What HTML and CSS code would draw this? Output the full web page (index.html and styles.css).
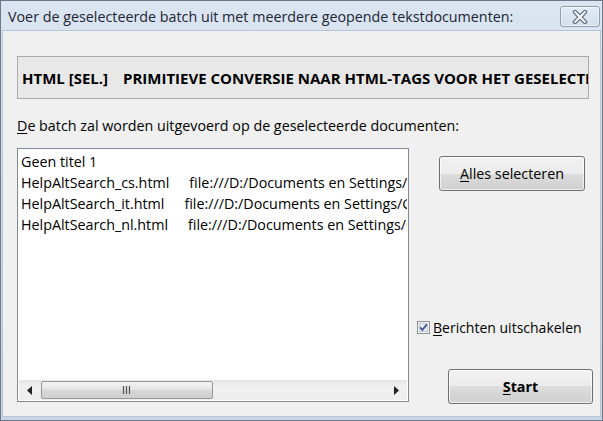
FILE: index.html
```html
<!DOCTYPE html>
<html>
<head>
<meta charset="utf-8">
<link rel="stylesheet" href="styles.css">
</head>
<body>
<div class="window">
  <div class="titlebar">
    <span class="title">Voer de geselecteerde batch uit met meerdere geopende tekstdocumenten:</span>
    <div class="close">
      <svg width="18" height="14" viewBox="0 0 18 14">
        <path d="M4 2 L14 12 M14 2 L4 12" stroke="#55606f" stroke-width="4.4" stroke-linecap="round" fill="none"/>
        <path d="M4 2 L14 12 M14 2 L4 12" stroke="#f4f6f8" stroke-width="2.4" stroke-linecap="round" fill="none"/>
      </svg>
    </div>
  </div>
  <div class="client">
    <div class="header">
      <span class="hname">HTML [SEL.]</span><span class="hdesc">PRIMITIEVE CONVERSIE NAAR HTML-TAGS VOOR HET GESELECTEERDE DOCUMENT</span>
    </div>
    <div class="label"><u>D</u>e batch zal worden uitgevoerd op de geselecteerde documenten:</div>
    <div class="main">
      <div class="listbox">
        <div class="items">
          <div class="item"><span class="name">Geen titel 1</span></div>
          <div class="item"><span class="name">HelpAltSearch_cs.html</span><span class="path">file:///D:/Documents en Settings/Gebruiker/Bureaublad/HelpAltSearch_cs.html</span></div>
          <div class="item"><span class="name">HelpAltSearch_it.html</span><span class="path">file:///D:/Documents en Settings/Gebruiker/Bureaublad/HelpAltSearch_it.html</span></div>
          <div class="item"><span class="name">HelpAltSearch_nl.html</span><span class="path">file:///D:/Documents en Settings/Gebruiker/Bureaublad/HelpAltSearch_nl.html</span></div>
        </div>
        <div class="hscroll">
          <div class="arrow">
            <svg width="6" height="9" viewBox="0 0 6 9"><path d="M5 0 L5 9 L0 4.5 Z" fill="#222"/></svg>
          </div>
          <div class="track">
            <div class="thumb">
              <svg width="10" height="8" viewBox="0 0 10 8"><path d="M1.5 0 V8 M4.5 0 V8 M7.5 0 V8" stroke="#555" stroke-width="1.2"/></svg>
            </div>
          </div>
          <div class="arrow">
            <svg width="6" height="9" viewBox="0 0 6 9"><path d="M1 0 L1 9 L6 4.5 Z" fill="#222"/></svg>
          </div>
        </div>
      </div>
      <div class="side">
        <div class="btn btn-all"><span class="btext"><u>A</u>lles selecteren</span></div>
        <label class="check">
          <svg class="box" width="13" height="13" viewBox="0 0 13 13">
            <rect x="0.5" y="0.5" width="12" height="12" fill="#f4f4f4" stroke="#8e8f8f"/>
            <rect x="2.5" y="2.5" width="8" height="8" fill="#e8ecf2" stroke="#c4cbd6"/>
            <path d="M3.2 6.4 L5.4 9 L9.8 3.4" stroke="#34508f" stroke-width="1.7" fill="none"/>
          </svg>
          <span class="ctext"><u>B</u>erichten uitschakelen</span>
        </label>
        <div class="btn btn-start"><span class="btext"><u>S</u>tart</span></div>
      </div>
    </div>
  </div>
</div>
</body>
</html>
```

FILE: styles.css
```css
html, body {
  margin: 0;
  padding: 0;
  width: 603px;
  height: 421px;
  overflow: hidden;
  background: #ffffff;
}

.window {
  box-sizing: border-box;
  width: 603px;
  height: 421px;
  border: 1px solid #6d7988;
  background: linear-gradient(#dbe5f1, #c5d6ea);
  display: flex;
  flex-direction: column;
  font-family: "Open Sans", "Noto Sans", sans-serif;
  font-size: 14.3px;
  color: #000;
}

.titlebar {
  height: 29px;
  display: flex;
  align-items: center;
  justify-content: space-between;
  padding-left: 7px;
  padding-right: 2px;
  flex: none;
}

.title {
  color: #1a2433;
  font-size: 14.3px;
  margin-top: 1px;
  white-space: nowrap;
}

.close {
  box-sizing: border-box;
  width: 40px;
  height: 21px;
  margin-top: 2px;
  border: 1px solid #8e9cb0;
  border-radius: 3px;
  background: linear-gradient(#e4ecf5, #d2dfee);
  box-shadow: inset 0 0 0 1px rgba(255,255,255,0.55);
  display: flex;
  align-items: center;
  justify-content: center;
}

.client {
  flex: 1;
  margin: 0 1px 3px 1px;
  background: #f0f0f0;
  border: 1px solid #b7c5d6;
  padding: 25px 6px 12px 14px;
  display: flex;
  flex-direction: column;
}

.header {
  box-sizing: border-box;
  height: 43px;
  margin-right: 5px;
  border: 1px solid #ababab;
  background: #e8e8e8;
  display: flex;
  align-items: center;
  padding-left: 4px;
  white-space: nowrap;
  overflow: hidden;
  font-weight: bold;
  font-size: 15px;
}

.hname {
  margin-right: 15px;
}

.label {
  margin-top: 17px;
  line-height: 20px;
  white-space: nowrap;
}

.main {
  margin-top: 12px;
  flex: 1;
  display: flex;
}

.listbox {
  box-sizing: border-box;
  width: 392px;
  height: 254px;
  border: 1px solid #828790;
  background: #ffffff;
  padding: 1px;
  display: flex;
  flex-direction: column;
}

.items {
  flex: 1;
  overflow: hidden;
  padding: 1px 0 0 2px;
}

.item {
  height: 21px;
  line-height: 21px;
  white-space: nowrap;
}

.path {
  margin-left: 20px;
}

.hscroll {
  height: 19px;
  display: flex;
  background: linear-gradient(#e6e6e6, #f0f0f0 30%, #ededed);
  border-top: 1px solid #e4e4e4;
}

.arrow {
  width: 22px;
  display: flex;
  align-items: center;
  justify-content: center;
}

.track {
  flex: 1;
  display: flex;
}

.thumb {
  box-sizing: border-box;
  width: 172px;
  height: 18px;
  border: 1px solid #979797;
  border-radius: 2px;
  background: linear-gradient(#f3f3f3, #e6e6e6 45%, #d6d6d6 55%, #cfcfcf);
  display: flex;
  align-items: center;
  justify-content: center;
}

.side {
  flex: 1;
  margin-left: 8px;
  display: flex;
  flex-direction: column;
  align-items: flex-start;
}

.btn {
  box-sizing: border-box;
  height: 35px;
  border: 1px solid #707070;
  border-radius: 3px;
  background: linear-gradient(#f2f2f2, #ebebeb 50%, #dddddd 50%, #cfcfcf);
  box-shadow: inset 0 0 0 1px rgba(255,255,255,0.7);
  display: flex;
  align-items: center;
  justify-content: center;
  white-space: nowrap;
}

.btn-all {
  width: 146px;
  margin-top: 8px;
  margin-left: 22px;
}

.btn-start {
  width: 145px;
  margin-top: 34px;
  margin-left: 31px;
  font-weight: bold;
}

.check {
  margin-top: 129px;
  display: flex;
  align-items: center;
  gap: 3px;
  height: 15px;
  white-space: nowrap;
  font-size: 14px;
}

.box {
  flex: none;
}

u {
  text-decoration: underline;
  text-underline-offset: 2px;
}
```
